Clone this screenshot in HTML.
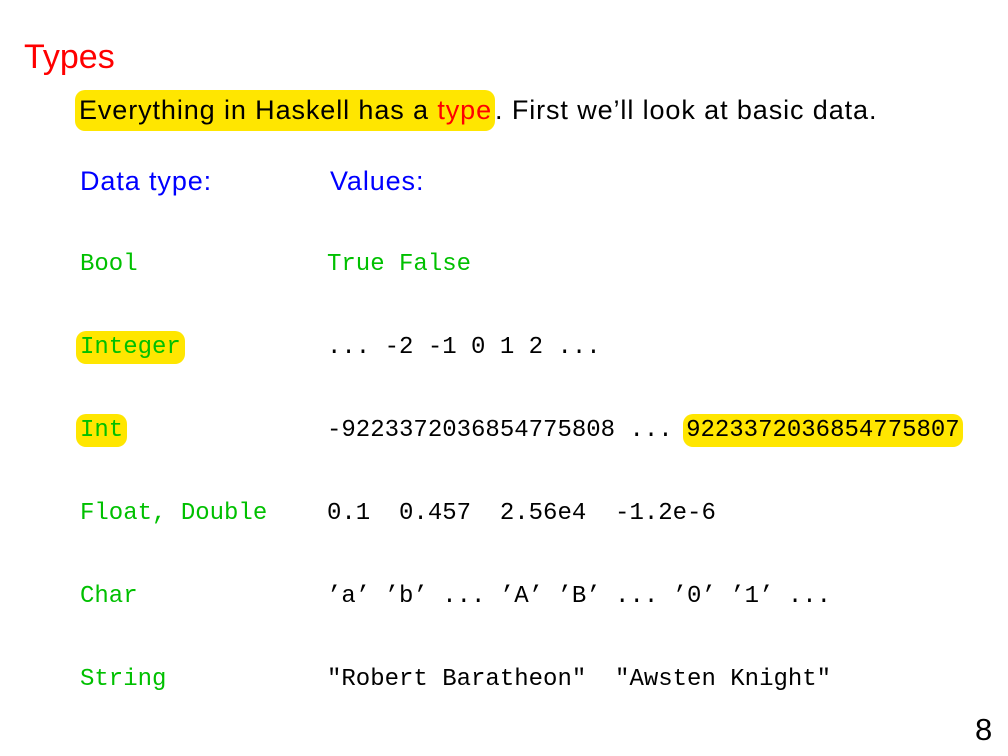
<!DOCTYPE html>
<html><head><meta charset="utf-8"><style>
body{margin:0;width:1008px;height:756px;background:#fff;position:relative;overflow:hidden}
.a{position:absolute;white-space:pre;line-height:1}
.s{font-family:"Liberation Sans",sans-serif;letter-spacing:0.9px}
.m{font-family:"Liberation Mono",monospace;font-size:24px;letter-spacing:0px}
.g{color:#00c000}
.hl{background:#ffe600;border-radius:10px}
</style></head><body>
<div class="a s" style="left:24px;top:40px;font-size:34px;color:#f00;letter-spacing:0">Types</div>
<div class="a s" style="left:75px;top:97px;font-size:27px;color:#000"><span class="hl" style="padding:5px 3px 6px 4px">Everything in Haskell has a <span style="color:#f00">type</span></span>. First we’ll look at basic data.</div>
<div class="a s" style="left:80px;top:168px;font-size:27px;color:#00f">Data type:</div>
<div class="a s" style="left:330px;top:168px;font-size:27px;color:#00f">Values:</div>

<div class="a m g" style="left:80px;top:253px">Bool</div>
<div class="a m g" style="left:327px;top:253px">True False</div>

<div class="a m g" style="left:76px;top:336px"><span class="hl" style="padding:3px 4px">Integer</span></div>
<div class="a m" style="left:327px;top:336px">... -2 -1 0 1 2 ...</div>

<div class="a m g" style="left:76px;top:419px"><span class="hl" style="padding:3px 4px">Int</span></div>
<div class="a m" style="left:327px;top:419px">-9223372036854775808 ... <span class="hl" style="padding:3px 3px;margin-left:-4px">9223372036854775807</span></div>

<div class="a m g" style="left:80px;top:502px">Float, Double</div>
<div class="a m" style="left:327px;top:502px">0.1  0.457  2.56e4  -1.2e-6</div>

<div class="a m g" style="left:80px;top:585px">Char</div>
<div class="a m" style="left:327px;top:585px">’a’ ’b’ ... ’A’ ’B’ ... ’0’ ’1’ ...</div>

<div class="a m g" style="left:80px;top:668px">String</div>
<div class="a m" style="left:327px;top:668px">"Robert Baratheon"  "Awsten Knight"</div>

<div class="a s" style="left:975px;top:714px;font-size:31px;color:#000;letter-spacing:0">8</div>
</body></html>
